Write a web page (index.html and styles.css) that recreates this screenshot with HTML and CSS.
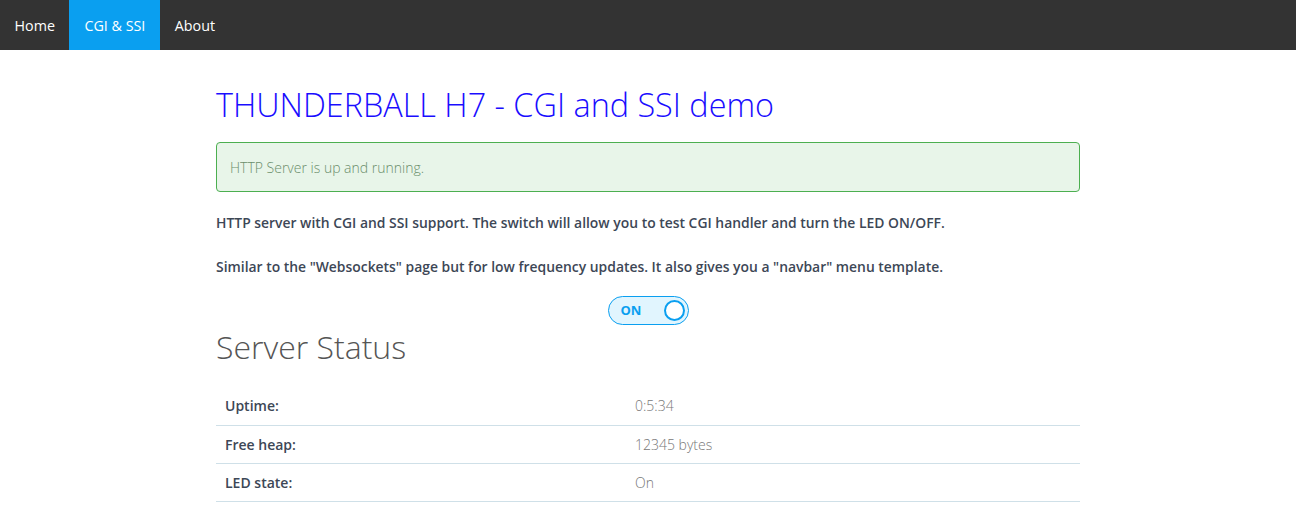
FILE: index.html
```html
<!DOCTYPE html>
<html>
<head>
<meta charset="utf-8">
<link rel="stylesheet" href="styles.css">
</head>
<body>
<nav class="navbar">
  <a class="nav-item">Home</a>
  <a class="nav-item active">CGI &amp; SSI</a>
  <a class="nav-item">About</a>
</nav>
<main class="container">
  <h1 class="title">THUNDERBALL H7 - CGI and SSI demo</h1>
  <div class="alert">HTTP Server is up and running.</div>
  <p class="text">HTTP server with CGI and SSI support. The switch will allow you to test CGI handler and turn the LED ON/OFF.</p>
  <p class="text">Similar to the "Websockets" page but for low frequency updates. It also gives you a "navbar" menu template.</p>
  <div class="switch-row">
    <div class="switch"><span class="switch-label">ON</span><span class="knob"></span></div>
  </div>
  <h2 class="subtitle">Server Status</h2>
  <table class="status">
    <tr><td class="key">Uptime:</td><td class="val">0:5:34</td></tr>
    <tr><td class="key">Free heap:</td><td class="val">12345 bytes</td></tr>
    <tr><td class="key">LED state:</td><td class="val">On</td></tr>
  </table>
</main>
</body>
</html>
```
FILE: styles.css
```css
* { box-sizing: border-box; }
body {
  margin: 0;
  font-family: "Open Sans", sans-serif;
  background: #fff;
  color: #3d4756;
}
.navbar {
  display: flex;
  height: 50px;
  background: #333;
}
.nav-item {
  display: flex;
  align-items: center;
  padding: 0 14.5px;
  color: #fff;
  font-size: 14.3px;
  font-weight: 400;
}
.active { background: #0a9ff0; padding: 0 15px; }
.container {
  width: 864px;
  margin: 0 auto;
  padding-top: 30px;
}
.title {
  margin: 0;
  font-size: 32.4px;
  font-weight: 300;
  color: #1a0dff;
  line-height: 48px;
}
.alert {
  margin-top: 14px;
  height: 50px;
  border: 1px solid #4caf50;
  border-radius: 4px;
  background: #e8f5e9;
  color: #6b8e6b;
  font-size: 14px;
  font-weight: 300;
  display: flex;
  align-items: center;
  padding: 0 13px;
}
.text {
  margin: 21px 0 0;
  font-size: 13.9px;
  font-weight: 600;
  color: #3d4756;
  line-height: 20px;
}
.text + .text { margin-top: 24px; }
.switch-row {
  display: flex;
  justify-content: center;
  margin-top: 19px;
}
.switch {
  width: 81px;
  height: 29px;
  border: 1px solid #0a9ff0;
  border-radius: 15px;
  background: #e1f5fe;
  display: flex;
  align-items: center;
  justify-content: space-between;
  padding: 0 3px 2px 12px;
}
.switch-label {
  color: #0a9ff0;
  font-size: 13px;
  font-weight: 700;
}
.knob {
  width: 21px;
  height: 21px;
  margin-top: 2px;
  border: 2px solid #0a9ff0;
  border-radius: 50%;
  background: #fff;
}
.subtitle {
  margin: 0;
  font-size: 32px;
  font-weight: 300;
  color: #555;
  line-height: 44px;
}
.status {
  width: 100%;
  margin-top: 18px;
  border-collapse: collapse;
  font-size: 14px;
}
.status td {
  height: 38px;
  padding: 0 9px;
  border-bottom: 1px solid #cfe0e8;
}
.key { width: 410px; font-weight: 600; color: #3d4756; }
.val { font-weight: 300; color: #777; }
```
